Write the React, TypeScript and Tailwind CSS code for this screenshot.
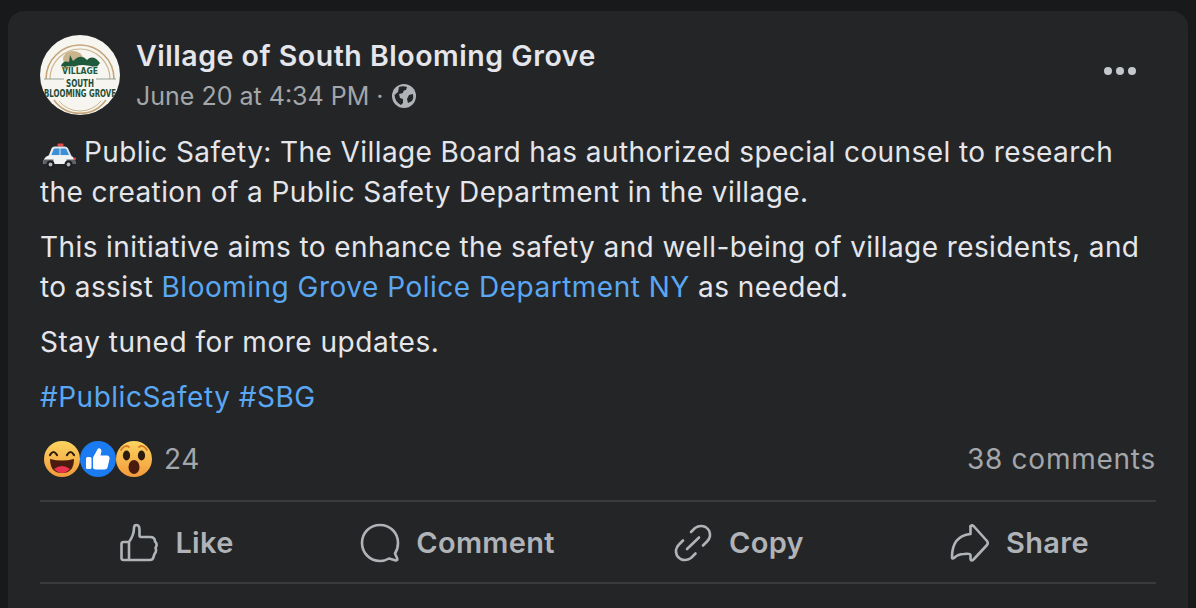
const logoFont = "'DejaVu Sans Condensed', 'Liberation Sans', sans-serif";

function Logo() {
  return (
    <svg viewBox="0 0 80 80" className="h-20 w-20 shrink-0 rounded-full bg-[#f6f5ef]">
      <path d="M6 44 A34 34 0 0 1 74 44" fill="none" stroke="#c4a67a" strokeWidth="1.600" />
      <path d="M10 44 A30 30 0 0 1 70 44" fill="none" stroke="#cdb68e" strokeWidth="1.200" />
      <ellipse cx="33" cy="24" rx="10" ry="8" fill="#c9b48e" />
      <path d="M21 31 Q23 25 29 27 L30 20 L33 26 Q41 18 47 25 Q53 19 60 28 L56 33 Q40 26 25 36 Z" fill="#1f5a3c" />
      <path d="M4 44 H24 M56 44 H76" stroke="#7d8d80" strokeWidth="0.800" />
      <text x="40" y="39" textAnchor="middle" fontSize="9.500" fontWeight="800" fill="#1f5a3c" stroke="#f6f5ef" strokeWidth="1.200" paintOrder="stroke" fontFamily={logoFont} textLength="36" lengthAdjust="spacingAndGlyphs">VILLAGE</text>
      <text x="40" y="52" textAnchor="middle" fontSize="10.500" fontWeight="800" fill="#1f4d36" fontFamily={logoFont} textLength="28" lengthAdjust="spacingAndGlyphs">SOUTH</text>
      <text x="40" y="62" textAnchor="middle" fontSize="11" fontWeight="800" fill="#1f4d36" fontFamily={logoFont} textLength="72" lengthAdjust="spacingAndGlyphs">BLOOMING GROVE</text>
      <path d="M14 65 A32 32 0 0 0 66 65" fill="none" stroke="#c4a67a" strokeWidth="1.600" />
      <path d="M19 66 A27 27 0 0 0 61 66" fill="none" stroke="#cdb68e" strokeWidth="1" />
    </svg>
  );
}

function GlobeFilled() {
  return (
    <svg viewBox="0 0 24 24" className="ml-[8px] h-6 w-6">
      <circle cx="12" cy="12" r="12" fill="#b0b3b8" />
      <path d="M7 3 Q11 1.500 15 3 L14 6 Q11 6 11 9 L7 10 L8 14 L11 15 L11 19 L9 21 Q3 18 2.500 11 L6 8 Z" fill="#242526" />
      <path d="M17 11 L21 10 Q22 14 20 17 L16 19 L15 15 Z" fill="#242526" />
    </svg>
  );
}

function PoliceCar() {
  return (
    <svg viewBox="0 0 34 26" className="mr-[7px] ml-[2px] inline-block h-[26px] w-[35px] align-[-7px]">
      <rect x="15" y="0.500" width="6" height="3" rx="1" fill="#e5484d" />
      <path d="M6 13 L9 5.500 Q10 3.500 12 3.500 H22 Q24.500 3.500 25.500 5.500 L29 13 Z" fill="#e6e9ec" />
      <path d="M9 12 L11 6.500 Q11.500 5.500 12.500 5.500 H17 V12 Z M18 5.500 H22.500 Q23.500 5.500 24 6.500 L26.500 12 H18 Z" fill="#3a8fd6" />
      <path d="M1 21 Q0 14.500 6 12.500 H28 Q33 14.500 33 21 Z" fill="#f1f2f4" />
      <path d="M1 21 Q0.500 18 1.500 16.500 H11 V21 Z M24 16.500 H32.500 Q33 18 33 21 H24 Z" fill="#5d6167" />
      <rect x="31" y="14.500" width="2.500" height="2.500" rx="1" fill="#d9474a" />
      <circle cx="8" cy="21.500" r="4" fill="#1c1e22" />
      <circle cx="8" cy="21.500" r="1.900" fill="#b4b8bd" />
      <circle cx="26" cy="21.500" r="4" fill="#1c1e22" />
      <circle cx="26" cy="21.500" r="1.900" fill="#b4b8bd" />
    </svg>
  );
}

function Reactions() {
  return (
    <div className="flex items-center">
      <svg viewBox="0 0 38 38" className="h-[38px] w-[38px]">
        <defs>
          <linearGradient id="face" x1="0" y1="0" x2="0" y2="1">
            <stop offset="0" stopColor="#fbd55f" />
            <stop offset="1" stopColor="#f39a3c" />
          </linearGradient>
        </defs>
        <circle cx="19" cy="19" r="18" fill="url(#face)" />
        <path d="M7 15 Q10.500 9 14 15 M24 15 Q27.500 9 31 15" fill="none" stroke="#2b1a10" strokeWidth="2.200" strokeLinecap="round" />
        <path d="M7 19 Q19 22 31 19 Q31 33 19 33 Q7 33 7 19 Z" fill="#4a1c10" />
        <path d="M11 29 Q19 23 27 29 Q23 33 19 33 Q15 33 11 29 Z" fill="#e8344e" />
      </svg>
      <svg viewBox="0 0 38 38" className="-ml-[2px] h-[38px] w-[38px]">
        <circle cx="19" cy="19" r="18" fill="#1b7cf2" />
        <rect x="7" y="17" width="5.500" height="12" rx="1.500" fill="#fff" />
        <path d="M14 17.500 L19 8.500 Q22 7.500 22.500 11 L21.500 15.500 H28.500 Q31 16 30.500 19 L28.500 27.500 Q28 29.500 25.500 29.500 H17 Q14 29.500 14 27 Z" fill="#fff" />
      </svg>
      <svg viewBox="0 0 38 38" className="-ml-[2px] h-[38px] w-[38px]">
        <circle cx="19" cy="19" r="18" fill="url(#face)" />
        <path d="M6 10 Q10 4 14 7 M24 7 Q28 4 32 10" fill="none" stroke="#d9792a" strokeWidth="1.800" strokeLinecap="round" />
        <ellipse cx="11.500" cy="15.500" rx="3.600" ry="5" fill="#2b1a10" />
        <ellipse cx="26.500" cy="15.500" rx="3.600" ry="5" fill="#2b1a10" />
        <ellipse cx="19" cy="27" rx="5.500" ry="7" fill="#4a1c10" />
      </svg>
    </div>
  );
}

function LikeIcon() {
  return (
    <svg viewBox="0 0 40 40" className="h-10 w-10 text-[#b0b3b8]" fill="none" stroke="currentColor" strokeWidth="2.600" strokeLinejoin="round" strokeLinecap="round">
      <path d="M10 19 H4.500 Q2.500 19 2.500 21 V35 Q2.500 37 4.500 37 H31 Q34 37 34.500 34 L35.500 31 Q38 28 36.500 25 Q39 21 36 18.500 Q36 14 31 14 H22 Q20.500 14 20.500 12 V7 Q20.500 2 17.500 2 Q15 2 15 5 Q15 12 10 19 V37" />
    </svg>
  );
}

function CommentIcon() {
  return (
    <svg viewBox="0 0 40 40" className="h-10 w-10 text-[#b0b3b8]" fill="none" stroke="currentColor" strokeWidth="2.600" strokeLinejoin="round" strokeLinecap="round">
      <path d="M20 2 C9.500 2 2 10 2 20 C2 30 10 38 20 38 C23.500 38 26.500 37 29 35.500 L36 37.500 Q38 37.500 37 35 L35 30.500 C37 27.500 38 24 38 20 C38 10 30.500 2 20 2 Z" />
    </svg>
  );
}

function CopyIcon() {
  return (
    <svg viewBox="0 0 40 40" className="h-10 w-10 text-[#b0b3b8]" fill="none" stroke="currentColor" strokeWidth="2.600" strokeLinecap="round">
      <path d="M18 9 L22 5 Q27 1.500 32.500 4 Q37.500 7 37 13 Q36.500 16 34 18.500 L30 22.500" />
      <path d="M22.500 30.500 L18 35 Q13 38.500 7.500 36 Q2.500 33 3 27 Q3.500 24 6 21.500 L10 17.500" />
      <path d="M14 26 L26 14.500" />
    </svg>
  );
}

function ShareIcon() {
  return (
    <svg viewBox="0 0 40 40" className="h-10 w-10 text-[#b0b3b8]" fill="none" stroke="currentColor" strokeWidth="2.600" strokeLinejoin="round" strokeLinecap="round">
      <path d="M21 3 Q20 2.500 20.500 4.500 V11 Q2 13 2 34 Q2 36.500 4 35 Q8 31 14 31 Q20 30 20.500 32 V36 Q21 38.500 23.500 36.500 L37 22 Q38.500 20 37 18 L24 3.500 Q22 1.500 21 3 Z" />
    </svg>
  );
}

const actions = [
  { label: "Like", icon: <LikeIcon /> },
  { label: "Comment", icon: <CommentIcon /> },
  { label: "Copy", icon: <CopyIcon /> },
  { label: "Share", icon: <ShareIcon /> },
];

export default function App() {
  return (
    <div className="h-[608px] w-[1196px] overflow-hidden bg-[#18191a] px-2 pt-[11px] font-['Inter',sans-serif]">
      <div className="h-[620px] rounded-2xl bg-[#242526] px-8 pt-6">
        {/* Header */}
        <div className="flex items-start gap-4">
          <Logo />
          <div className="flex-1 pt-[1px]">
            <div className="text-[28.500px] leading-[40px] font-semibold tracking-[0.53px] text-[#e4e6eb]">
              Village of South Blooming Grove
            </div>
            <div className="flex items-center text-[25px] leading-[40px] text-[#a3a6ab]">
              June 20 at 4:34 PM ·
              <GlobeFilled />
            </div>
          </div>
          <div className="mt-[32px] mr-[20px] flex gap-[4px]">
            <span className="h-[8px] w-[8px] rounded-full bg-[#c4c7cc]" />
            <span className="h-[8px] w-[8px] rounded-full bg-[#c4c7cc]" />
            <span className="h-[8px] w-[8px] rounded-full bg-[#c4c7cc]" />
          </div>
        </div>

        {/* Body */}
        <div className="mt-[16px] text-[28px] leading-[40px] tracking-[0.41px] text-[#e4e6eb]">
          <p>
            <PoliceCar />
            Public Safety: The Village Board has authorized special counsel to research
            <br />
            the creation of a Public Safety Department in the village.
          </p>
          <p className="mt-[15px]">
            This initiative aims to enhance the safety and well-being of village residents, and
            <br />
            to assist <span className="tracking-[0.5px] text-[#5aa7f3]">Blooming Grove Police Department NY</span> as needed.
          </p>
          <p className="mt-[15px] tracking-[0.52px]">Stay tuned for more updates.</p>
          <p className="mt-[15px] tracking-[0.5px] text-[#5aa7f3]">#PublicSafety #SBG</p>
        </div>

        {/* Counts */}
        <div className="mt-[22px] flex items-center justify-between pb-[21px] text-[28px] leading-[40px] text-[#a3a6ab]">
          <div className="flex items-center gap-[11px] tracking-[0.55px]">
            <div className="ml-[3px]">
              <Reactions />
            </div>
            <span>24</span>
          </div>
          <span className="tracking-[0.75px]">38 comments</span>
        </div>

        {/* Actions */}
        <div className="h-[84px] border-y-2 border-[#3a3b3c]">
          <div className="-mx-[4px] grid h-full grid-cols-4 pt-[1px]">
            {actions.map((a) => (
              <div key={a.label} className="flex items-center justify-center gap-[16px] text-[29px] font-semibold tracking-[0.3px] text-[#b0b3b8]">
                {a.icon}
                {a.label}
              </div>
            ))}
          </div>
        </div>
      </div>
    </div>
  );
}
